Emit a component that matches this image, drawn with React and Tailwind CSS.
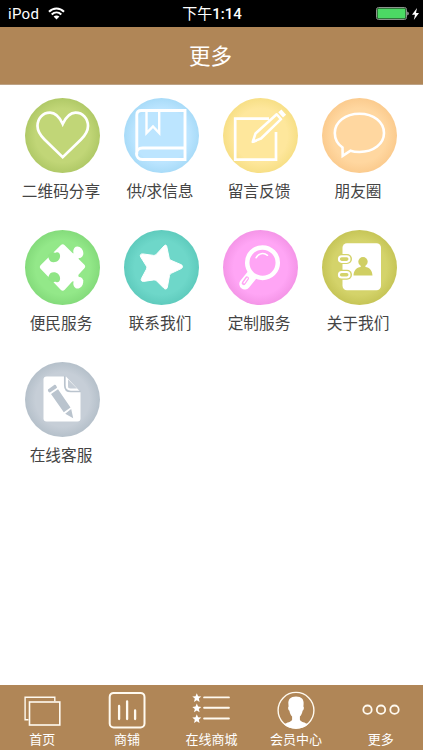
import React from 'react';

const HeartIcon = () => (
  <path
    d="M37.7 26C34 18 29.5 14.7 25 14.7c-7.500 0-12.500 6-12.500 13.300 0 5.500 3 9.500 7 13.500l18.200 17.700L56 41.500c4-4 7-8 7-13.500 0-7.300-5-13.300-12.500-13.300-4.500 0-9 3.300-12.800 11.300z"
    fill="none"
    stroke="#fff"
    strokeWidth="2.700"
  />
);

const BookIcon = () => (
  <g fill="none" stroke="#fff" strokeWidth="2.900">
    <path d="M17.500 12.500H61V61.500H18.500C10.500 61.500 10.500 50 18.500 50H61M12.800 56V17c0-3 1.700-4.500 4.700-4.500" />
    <path d="M22.500 12.500V35l6.500-6.500 6.200 6.500V12.500" strokeWidth="2.400" />
  </g>
);

const NoteIcon = () => (
  <g>
    <path
      d="M46 20.700H12.200V61.700H53V34"
      fill="none"
      stroke="#fff"
      strokeWidth="2.700"
    />
    <path
      d="M29.800 43.700l2.700-8.200L53.700 16.300l4.300 4.900-20 19.300z"
      fill="#fee79c"
      stroke="#fff"
      strokeWidth="2.500"
      strokeLinejoin="round"
    />
    <path d="M55.200 14.200l3.200-2.800 4.700 5.300-3.100 2.900z" fill="#fff" />
    <path d="M29.200 44.700l1.300-4.200 3 3z" fill="#fff" stroke="#fff" />
  </g>
);

const BubbleIcon = () => (
  <path
    d="M20.500 49.500C15.500 46 12.800 41 12.800 35c0-10.800 10.500-19.300 24.700-19.300S62 24.200 62 35 51.700 54 37.500 54c-3.600 0-6.500-.4-9-1.300l-7.800 5.100z"
    fill="none"
    stroke="#fff"
    strokeWidth="2.600"
  />
);

const PuzzleIcon = () => (
  <g>
    <path
      d="M35.700 15.300q2-2 4 0l19.500 19.200q2 2 0 4L39.700 59.700q-2 2-4 0L15.800 39q-2-2 0-4z"
      fill="#fff"
    />
    {/* knobs on the right side */}
    <g fill="#fff">
      <ellipse cx="53.300" cy="22.300" rx="4.800" ry="6" transform="rotate(-25 53.300 22.300)" />
      <ellipse cx="53.300" cy="52.700" rx="4.800" ry="6" transform="rotate(25 53.300 52.700)" />
      <path d="M45 24l5-1 4 4-1 4zM46 51l5 1 3-4-1-4z" />
    </g>
    {/* notches on the left side */}
    <g fill="#8fe585">
      <path d="M23.500 28c1 2.800 2.300 4.300 5.200 4.300 3.600 0 6.400-2.700 6.400-6.200 0-2.800-1.700-4.400-4-3.600-1.200.5-2.200.2-3.300-.7l-5 3z" />
      <path d="M23.500 46.500c1-2.800 2.300-4.300 5.200-4.300 3.600 0 6.400 2.700 6.400 6.200 0 2.800-1.700 4.400-4 3.600-1.200-.5-2.200-.2-3.300.7l-5-3z" />
    </g>
  </g>
);

const StarIcon = () => (
  <path
    d="M40.300 15.700c.8-1 2.100-.7 2.400.5l2.500 12c.2 1 .8 1.700 1.700 2.100l10.300 4.400c1.800.8 1.800 3 0 3.900l-10 4.700c-.9.400-1.500 1.200-1.700 2.200l-2.200 12c-.4 1.700-2.200 2-3.300.8L32.400 50.700c-.7-.6-1.500-.9-2.500-.8l-10.300 1.500c-2.100.3-3-1.300-2.100-3l5-9.300c.4-.9.400-1.900 0-2.800l-5.800-9.300c-1.100-1.800 0-3.300 2-3.100l11 1.500c.9.100 1.800-.2 2.500-.9z"
    fill="#fff"
    stroke="#fff"
    strokeLinejoin="round"
  />
);

const SearchIcon = () => (
  <g>
    <path
      d="M29.300 44.800l-7.500 9.200"
      stroke="#fff"
      strokeWidth="11"
      strokeLinecap="round"
    />
    <circle cx="39.500" cy="32.700" r="15.300" fill="#ffa5f5" stroke="#fff" strokeWidth="4.500" />
    <path
      d="M33 27.800c2.300-4.600 7.800-5.400 11.500-2.500"
      fill="none"
      stroke="#fff"
      strokeWidth="1.500"
      strokeLinecap="round"
    />
    <path
      d="M24 48.300l-3.300 4.900"
      stroke="#ffa5f5"
      strokeWidth="4"
      strokeLinecap="round"
    />
    <path
      d="M24.200 48.300l-3.200 4.500"
      stroke="#fff"
      strokeWidth="1.300"
      strokeLinecap="round"
    />
  </g>
);

const ContactsIcon = () => (
  <g>
    <rect x="20.500" y="13.300" width="38.500" height="47" rx="4.500" fill="#fff" />
    {/* binder rings */}
    <rect x="13" y="24" width="17" height="10" rx="5" fill="#d4d36a" />
    <rect x="13" y="39.700" width="17" height="10" rx="5" fill="#d4d36a" />
    <rect x="16.900" y="26.300" width="10.600" height="5.600" rx="2.800" fill="#d4d36a" stroke="#fff" strokeWidth="2" />
    <rect x="16.900" y="42" width="10.600" height="5.600" rx="2.800" fill="#d4d36a" stroke="#fff" strokeWidth="2" />
    <circle cx="41" cy="31.700" r="4.700" fill="#d0cf63" />
    <path d="M31.500 45.500c.3-5.200 3-8 7.200-8.500v-3h4.700v3c4.200.5 6.800 3.300 7.100 8.500z" fill="#d0cf63" />
  </g>
);

const DocumentIcon = () => (
  <g>
    <path
      d="M21.500 14.500H41L55.500 30v26.500a3 3 0 01-3 3h-31a3 3 0 01-3-3v-39a3 3 0 013-3z"
      fill="#fff"
    />
    <path
      d="M39.800 14v9.500c0 4 2 6 6 6h10"
      fill="none"
      stroke="#bac4ce"
      strokeWidth="1.700"
    />
    <path d="M43 17.500V24c0 1.800.8 2.500 2.500 2.500H52z" fill="#c6ced7" />
    <path d="M23 27.500l6.500-4.700c1.200-.8 2.500 2 2.500 3l-7 4.800c-1 .3-2.700-2.200-2-3.100z" fill="#bac4ce" />
    <path d="M26 32l7-4.700 12.500 18.200-6.700 4.800zM40.200 51.800l6-4.700 2 9.100z" fill="#bac4ce" />
  </g>
);

const menuItems = [
  { label: '二维码分享', icon: HeartIcon, inner: '#c1d677', outer: '#b0c967' },
  { label: '供/求信息', icon: BookIcon, inner: '#bce5ff', outer: '#a8dbf8' },
  { label: '留言反馈', icon: NoteIcon, inner: '#fee79c', outer: '#f7df86' },
  { label: '朋友圈', icon: BubbleIcon, inner: '#ffd7a0', outer: '#fbcb8e' },
  { label: '便民服务', icon: PuzzleIcon, inner: '#93e889', outer: '#84db7b' },
  { label: '联系我们', icon: StarIcon, inner: '#6ed7c9', outer: '#5fcbbd' },
  { label: '定制服务', icon: SearchIcon, inner: '#ffa5f5', outer: '#f495e7' },
  { label: '关于我们', icon: ContactsIcon, inner: '#d4d36a', outer: '#c6c557' },
  { label: '在线客服', icon: DocumentIcon, inner: '#c6ced7', outer: '#b5c0ca' },
];

const HomeTab = () => (
  <g strokeWidth="1.400">
    <path d="M6.500 30.700H3.100V8.300h29.700v4" />
    <rect x="7.500" y="13" width="30.300" height="23" strokeWidth="1.600" />
  </g>
);

const ShopTab = () => (
  <g strokeLinecap="round">
    <rect x="2.700" y="3.900" width="34.800" height="34.600" rx="4" strokeWidth="2" />
    <path d="M12.100 17v13M20.100 12.300V30M28.100 21.500V30" strokeWidth="2.300" />
  </g>
);

const ListTab = () => (
  <g>
    {[8.700, 19.100, 29.800].map((y) => (
      <g key={y} transform={`translate(5.800 ${y})`}>
        <path
          d="M0-4.500l1.300 3 3.200.3L2 .9l.8 3.300L0 2.500l-2.800 1.700L-2 .9l-2.500-2.100 3.200-.3z"
          fill="#fff"
          stroke="none"
        />
        <path d="M7.300-.3h24.800" strokeWidth="1.900" strokeLinecap="round" />
      </g>
    ))}
  </g>
);

const MemberTab = () => (
  <g>
    <circle cx="20" cy="21.300" r="17.900" strokeWidth="1.400" />
    <path
      d="M20 7.600c-5.500 0-8 2.900-7.600 7.500l.2 2.300c-1 .6-.4 3.800.8 4.400.4 2.600 1.300 4.400 2.700 5.700v3.200c-.5 2.200-5.500 2.600-8.100 4.700A17.600 17.600 0 0020 39.500a17.600 17.600 0 0012-4.100c-2.600-2.100-7.600-2.500-8.100-4.700v-3.200c1.400-1.300 2.300-3.100 2.700-5.700 1.200-.6 1.800-3.800.8-4.400l.2-2.300C28 10.500 25.500 7.600 20 7.600z"
      fill="#fff"
      stroke="none"
    />
  </g>
);

const MoreTab = () => (
  <g strokeWidth="1.800">
    <circle cx="6.500" cy="20.700" r="4.200" />
    <circle cx="20" cy="20.700" r="4.200" />
    <circle cx="33.500" cy="20.700" r="4.200" />
  </g>
);

const tabs = [
  { label: '首页', icon: HomeTab },
  { label: '商铺', icon: ShopTab },
  { label: '在线商城', icon: ListTab },
  { label: '会员中心', icon: MemberTab },
  { label: '更多', icon: MoreTab },
];

const StatusBar = () => (
  <div className="grid h-[27px] shrink-0 grid-cols-3 items-center bg-black px-2 text-[15px] leading-[27px] text-white">
    <div className="flex items-center gap-[9px]">
      <span className="pt-px font-[Roboto,sans-serif] text-[15px] leading-[26px] tracking-[0.300px]">
        iPod
      </span>
      <svg className="h-[13px] w-[17px]" viewBox="0 0 17 13" fill="none" stroke="#fff" strokeWidth="2">
        <path d="M1 4.700c4.200-4.300 10.800-4.300 15 0M3.700 7.500c2.800-2.700 6.800-2.700 9.600 0" />
        <path d="M5.600 9.600c1.800-1.600 4-1.600 5.800 0L8.500 12.500z" fill="#fff" stroke="none" />
      </svg>
    </div>
    <div className="pt-px pl-px text-center leading-[26px] whitespace-nowrap">
      下午<span className="font-[Roboto,sans-serif] font-medium">1:14</span>
    </div>
    <div className="-mr-1 flex items-center justify-end gap-[3px]">
      <svg className="h-[13px] w-[33px]" viewBox="0 0 33 13">
        <rect x=".5" y=".5" width="30" height="12" rx="2" fill="#101810" stroke="#8d948d" />
        <rect x="1.500" y="1.500" width="28" height="10" rx="1" fill="#4cd964" />
        <path d="M31.500 4.500c1.400.5 1.400 3.500 0 4z" fill="#fff" />
      </svg>
      <svg className="h-[12px] w-[7px]" viewBox="0 0 7 12" fill="#fff">
        <path d="M5 0L0 6.800h3L1.800 12 7 5H4z" />
      </svg>
    </div>
  </div>
);

const MenuItem = ({ item, index }) => {
  const Icon = item.icon;
  const gradientId = `circle-${index}`;
  return (
    <div className="flex h-[132px] flex-col items-center">
      <svg className="h-[75px] w-[75px] shrink-0" viewBox="0 0 75 75">
        <defs>
          <radialGradient id={gradientId}>
            <stop offset="72%" stopColor={item.inner} />
            <stop offset="100%" stopColor={item.outer} />
          </radialGradient>
        </defs>
        <circle cx="37.500" cy="37.500" r="37.500" fill={`url(#${gradientId})`} />
        <Icon />
      </svg>
      <span className="mt-[7px] mr-[2px] text-[15.700px] leading-6 whitespace-nowrap text-[#444]">
        {item.label}
      </span>
    </div>
  );
};

const App = () => {
  return (
    <div className="flex h-[750px] w-[423px] flex-col overflow-hidden bg-white font-['Liberation_Sans','Noto_Sans_CJK_SC',sans-serif]">
      <StatusBar />

      {/* Header */}
      <header className="flex h-[58px] shrink-0 items-center justify-center border-b border-[#bda285] bg-[#b08657] pt-[2px] pr-[2px]">
        <h1 className="text-[21.500px] leading-[30px] text-white">更多</h1>
      </header>

      {/* Menu grid */}
      <main className="min-h-0 flex-1 pt-[12.700px] pl-[12.500px]">
        <div className="grid w-[396px] grid-cols-4">
          {menuItems.map((item, index) => (
            <MenuItem key={item.label} item={item} index={index} />
          ))}
        </div>
      </main>

      {/* Bottom tabs */}
      <nav className="grid h-[65px] shrink-0 grid-cols-5 bg-[#b08657] pt-1">
        {tabs.map(({ label, icon: Icon }) => (
          <div key={label} className="flex flex-col items-center">
            <svg className="h-10 w-10 shrink-0" viewBox="0 0 40 40" fill="none" stroke="#fffaf0">
              <Icon />
            </svg>
            <span className="mt-[2px] text-[13px] leading-[18px] whitespace-nowrap text-white">
              {label}
            </span>
          </div>
        ))}
      </nav>
    </div>
  );
};

export default App;
